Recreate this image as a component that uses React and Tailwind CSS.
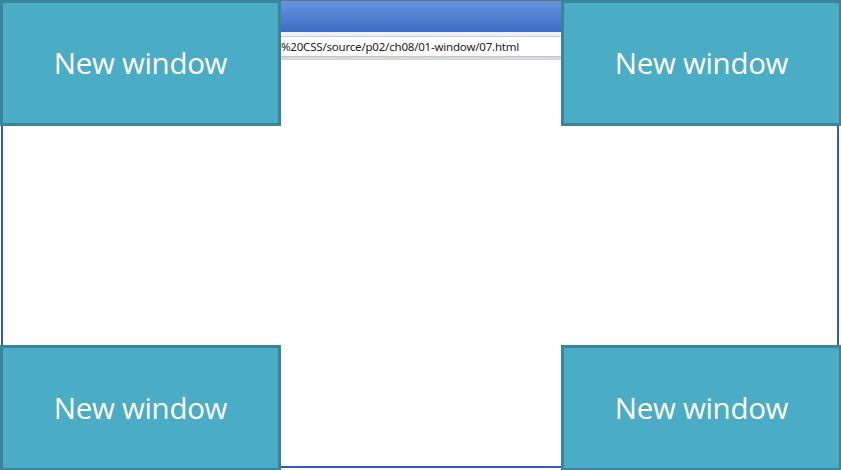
import React from "react";

function NewWindow({ className }) {
  return (
    <div
      className={`absolute flex items-center justify-center w-[281px] h-[126px] bg-[#4bacc6] border-[3px] border-[#3a8599] ${className}`}
    >
      <span className="text-[29.5px] text-[#fffdf2] font-['Open_Sans',sans-serif] tracking-[-0.3px] leading-none">
        New window
      </span>
    </div>
  );
}

export default function App() {
  return (
    <div className="relative w-[841px] h-[470px] overflow-hidden bg-white font-['Noto_Sans',sans-serif]">
      {/* browser window behind */}
      <div className="flex flex-col h-[468px] ml-px mr-[2px] border-x-2 border-b-2 border-[#3459b8]">
        <div className="h-[32px] border-t border-[#6b6f7a] bg-gradient-to-b from-[#6593dc] to-[#3f6dc7]" />
        <div className="h-[5px] bg-[#eef1f5] border-b border-[#c9ccd1]" />
        <div className="h-[19px] bg-white flex items-center pl-[278px] overflow-hidden">
          <span className="text-[11.5px] text-[#222] whitespace-nowrap tracking-[-0.2px]">
            %20CSS/source/p02/ch08/01-window/07.html
          </span>
        </div>
        <div className="h-[4px] bg-[#d6d8dc] border-t border-[#c4c6ca]" />
        <div className="flex-1 bg-white" />
      </div>

      <NewWindow className="left-0 top-0" />
      <NewWindow className="left-[561px] top-0" />
      <NewWindow className="left-0 top-[345px]" />
      <NewWindow className="left-[561px] top-[345px]" />
    </div>
  );
}
